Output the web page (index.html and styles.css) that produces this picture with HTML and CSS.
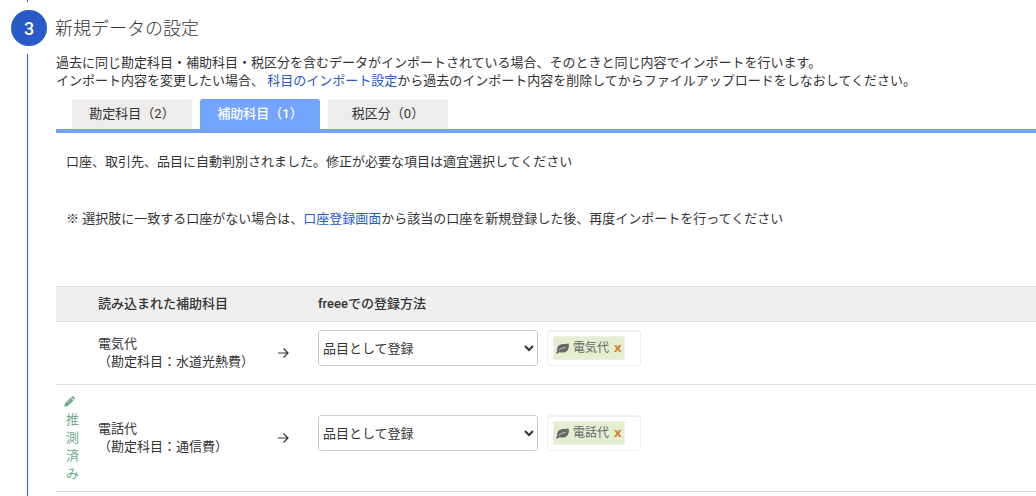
FILE: index.html
```html
<!DOCTYPE html>
<html lang="ja">
<head>
<meta charset="utf-8">
<meta name="viewport" content="width=device-width, initial-scale=1">
<title>新規データの設定</title>
<link rel="stylesheet" href="styles.css">
</head>
<body>
<svg class="sprite" aria-hidden="true">
  <symbol id="arrow" viewBox="0 0 12 12"><path d="M1 6H11M6.500 1.500L11 6L6.500 10.500" fill="none" stroke="currentColor" stroke-width="1.200"/></symbol>
  <symbol id="leaf" viewBox="0 0 13 11"><path d="M12.400 0.300C13.100 2.200 13.200 4.500 11.900 6.700C10.400 9.200 7.500 9.900 4.700 9.400C3.500 9.200 2.900 9.300 2.300 9.900C1.700 10.600 1.100 10.900 0.600 10.400C0 9.800 0.200 9.200 1 8.500C1.300 8.100 1.200 7.700 1.100 7C0.900 4 2.800 1.900 5.500 1.300C8.200 0.800 10.800 1.500 12.400 0.300Z" fill="currentColor"/><path d="M3.200 7.200C4.900 5.400 6.700 4.600 9.300 4.500" fill="none" stroke="#e4efd2" stroke-width="0.800" stroke-linecap="round"/></symbol>
  <symbol id="pencil" viewBox="0 0 12 12"><path d="M0.300 11.700L1 7.800L7.200 1.600L10.400 4.800L4.200 11ZM7.800 1L8.700 0.300Q9.500 -0.200 10.200 0.400L11.600 1.800Q12.200 2.500 11.700 3.300L11 4.200Z" fill="currentColor"/><path d="M2.900 7.900L7.200 3.600" fill="none" stroke="#fff" stroke-width="0.500"/></symbol>
</svg>
<main class="step">
  <div class="rail">
    <span class="rail-top"></span>
    <span class="badge">3</span>
    <span class="rail-line"></span>
  </div>
  <section class="content">
    <h1 class="title">新規データの設定</h1>
    <p class="lead">過去に同じ勘定科目・補助科目・税区分を含むデータがインポートされている場合、そのときと同じ内容でインポートを行います。<br>インポート内容を変更したい場合、 <a class="link" href="#">科目のインポート設定</a>から過去のインポート内容を削除してからファイルアップロードをしなおしてください。</p>
    <div class="tabs" role="tablist">
      <button class="tab" type="button" role="tab" aria-selected="false">勘定科目（2）</button>
      <button class="tab active" type="button" role="tab" aria-selected="true">補助科目（1）</button>
      <button class="tab" type="button" role="tab" aria-selected="false">税区分（0）</button>
    </div>
    <p class="message">口座、取引先、品目に自動判別されました。修正が必要な項目は適宜選択してください</p>
    <p class="note">※ 選択肢に一致する口座がない場合は、<a class="link" href="#">口座登録画面</a>から該当の口座を新規登録した後、再度インポートを行ってください</p>
    <table class="mapping">
      <colgroup><col class="col-state"><col class="col-name"><col class="col-arrow"><col></colgroup>
      <thead>
        <tr><th></th><th scope="col">読み込まれた補助科目</th><th></th><th scope="col">freeeでの登録方法</th></tr>
      </thead>
      <tbody>
        <tr>
          <td class="state"></td>
          <td id="item1">電気代<br>（勘定科目：水道光熱費）</td>
          <td><svg class="arrow" aria-hidden="true"><use href="#arrow"/></svg></td>
          <td><div class="method">
            <select class="select" aria-labelledby="item1"><option>品目として登録</option></select>
            <div class="tag-box"><span class="tag"><svg class="leaf" aria-hidden="true"><use href="#leaf"/></svg>電気代<button class="remove" type="button">x</button></span></div>
          </div></td>
        </tr>
        <tr>
          <td class="state"><svg class="pencil" aria-hidden="true"><use href="#pencil"/></svg><span class="guessed">推測済み</span></td>
          <td id="item2">電話代<br>（勘定科目：通信費）</td>
          <td><svg class="arrow" aria-hidden="true"><use href="#arrow"/></svg></td>
          <td><div class="method">
            <select class="select" aria-labelledby="item2"><option>品目として登録</option></select>
            <div class="tag-box"><span class="tag"><svg class="leaf" aria-hidden="true"><use href="#leaf"/></svg>電話代<button class="remove" type="button">x</button></span></div>
          </div></td>
        </tr>
      </tbody>
    </table>
  </section>
</main>
</body>
</html>
```
FILE: styles.css
```css
* { box-sizing: border-box; }
body {
  margin: 0;
  background: #fff;
  color: #333;
  font: 400 13px/18px Roboto, "Noto Sans CJK JP", sans-serif;
}
button, select { font: inherit; color: inherit; }
p { margin: 0; }
.sprite { display: none; }

.step { display: flex; min-height: 100vh; }
.rail {
  flex: none;
  display: flex;
  flex-direction: column;
  gap: 8px;
  width: 55px;
  padding-left: 11px;
}
.rail-top, .rail-line { width: 1px; margin-left: 16px; background: #285ac8; }
.rail-top { height: 2px; }
.rail-line { flex: 1; }
.badge {
  width: 36px;
  height: 36px;
  border-radius: 50%;
  background: #285ac8;
  color: #fff;
  font-size: 18px;
  font-weight: 500;
  line-height: 38px;
  text-align: center;
}

.content { flex: 1; min-width: 0; padding-left: 1px; }
.title {
  margin: 17px 0 13px -1px;
  font-size: 18px;
  font-weight: 300;
  line-height: 24px;
}
.link { color: #285ac8; text-decoration: none; }
.tabs {
  display: flex;
  gap: 8px;
  margin-top: 9px;
  padding-left: 16px;
  border-bottom: 4px solid #73a5ff;
}
.tab {
  width: 120px;
  height: 30px;
  padding: 0;
  border: 0;
  border-radius: 3px 3px 0 0;
  background: #eeedec;
}
.tab.active { background: #73a5ff; color: #fff; font-weight: 500; }
.message { padding: 20px 10px 0; }
.note { padding: 39px 10px 58px; }

.mapping { width: 100%; border-collapse: collapse; table-layout: fixed; }
.col-state { width: 32px; }
.col-name { width: 179px; }
.col-arrow { width: 41px; }
.mapping th, .mapping td { padding: 8px 10px; text-align: left; vertical-align: middle; }
.mapping th { background: #efefef; font-weight: 500; }
.mapping tr { border-top: 1px solid #dcdcdc; border-bottom: 1px solid #dcdcdc; }
.mapping .state { padding: 8px; color: #6eaa8c; }
.pencil { display: block; width: 11px; height: 11px; margin: 3px 0 4px; }
.guessed { display: block; margin-left: 2px; width: 13px; word-break: break-all; }
.arrow { display: block; width: 12px; height: 12px; }

.method { display: flex; gap: 9px; padding-bottom: 10px; }
.select {
  width: 220px;
  height: 36px;
  padding: 0;
  border: 1px solid #ccc;
  border-radius: 3px;
  background: #fff;
}
.tag-box {
  width: 94px;
  height: 36px;
  padding: 4px 5px;
  border: 1px solid #eee;
  border-top-width: 2px;
  border-radius: 4px;
}
.tag {
  display: inline-flex;
  align-items: center;
  height: 24px;
  padding: 0 2px;
  border: 1px solid #eee;
  border-radius: 2px;
  background: #e4efd2;
  color: #666;
  font-size: 12px;
}
.leaf { width: 13px; height: 11px; margin-right: 4px; }
.remove {
  padding: 0 0 2px 5px;
  border: 0;
  background: none;
  color: #dc7d32;
  font: 700 13px/18px "Open Sans", sans-serif;
}
```
